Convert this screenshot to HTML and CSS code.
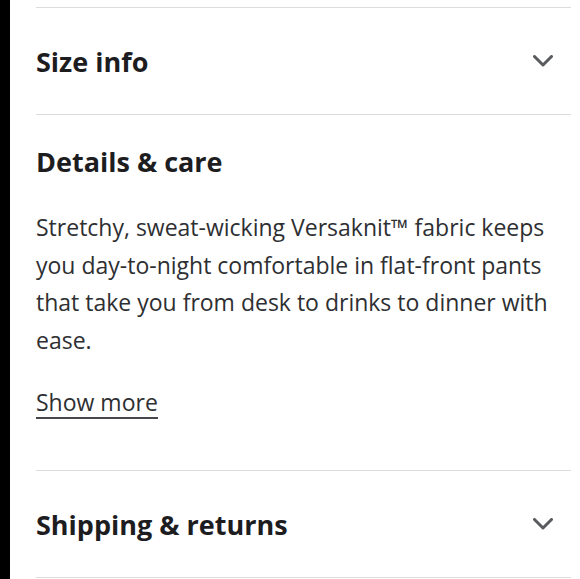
FILE: index.html
```html
<!DOCTYPE html>
<html lang="en">
<head>
  <meta charset="UTF-8">
  <meta name="viewport" content="width=device-width, initial-scale=1.0">
  <title>Product info</title>
  <link rel="stylesheet" href="styles.css">
</head>
<body>

<div class="borde-negro"></div>

<div class="panel">
  <div class="seccion">
    <button class="cabecera">
      <span>Size info</span>
      <svg class="flecha" viewBox="0 0 20 12" width="20" height="12"><path d="M1.5 1.5 L10 10 L18.5 1.5" /></svg>
    </button>
  </div>

  <div class="seccion abierta">
    <h2>Details &amp; care</h2>
    <p class="descripcion">Stretchy, sweat-wicking Versaknit™ fabric keeps you day-to-night comfortable in flat-front pants that take you from desk to drinks to dinner with ease.</p>
    <a href="#" class="ver-mas">Show more</a>
  </div>

  <div class="seccion ultima">
    <button class="cabecera">
      <span>Shipping &amp; returns</span>
      <svg class="flecha" viewBox="0 0 20 12" width="20" height="12"><path d="M1.5 1.5 L10 10 L18.5 1.5" /></svg>
    </button>
  </div>
</div>

</body>
</html>
```

FILE: styles.css
```css
body {
  margin: 0;
  display: flex;
  min-height: 579px;
  background: white;
  font-family: "Open Sans", Lato, sans-serif;
  color: #2e2f32;
}
.borde-negro {
  width: 10px;
  background: #000;
}
.panel {
  flex: 1;
  padding: 7px 9px 0 26px;
}
.seccion {
  border-top: 1px solid #dcdcdc;
}
.seccion.ultima {
  border-bottom: 1px solid #dcdcdc;
}
.cabecera {
  width: 100%;
  height: 106px;
  display: flex;
  align-items: center;
  justify-content: space-between;
  padding: 0 18px 0 0;
  border: none;
  background: none;
  font-family: inherit;
  font-size: 27px;
  font-weight: 700;
  color: #1d1d1f;
  cursor: pointer;
}
.flecha {
  fill: none;
  stroke: #5a5b5e;
  stroke-width: 3;
  stroke-linecap: round;
  stroke-linejoin: round;
}
.abierta h2 {
  margin: 29px 0 0;
  font-size: 27px;
  line-height: 36px;
  font-weight: 700;
  color: #1d1d1f;
}
.descripcion {
  margin: 29px 0 0;
  font-size: 23px;
  line-height: 37.5px;
}
.ver-mas {
  display: inline-block;
  margin: 30px 0 51px;
  padding-bottom: 2px;
  font-size: 23px;
  line-height: 26px;
  color: #2e2f32;
  text-decoration: none;
  border-bottom: 2px solid #46474a;
}
```
